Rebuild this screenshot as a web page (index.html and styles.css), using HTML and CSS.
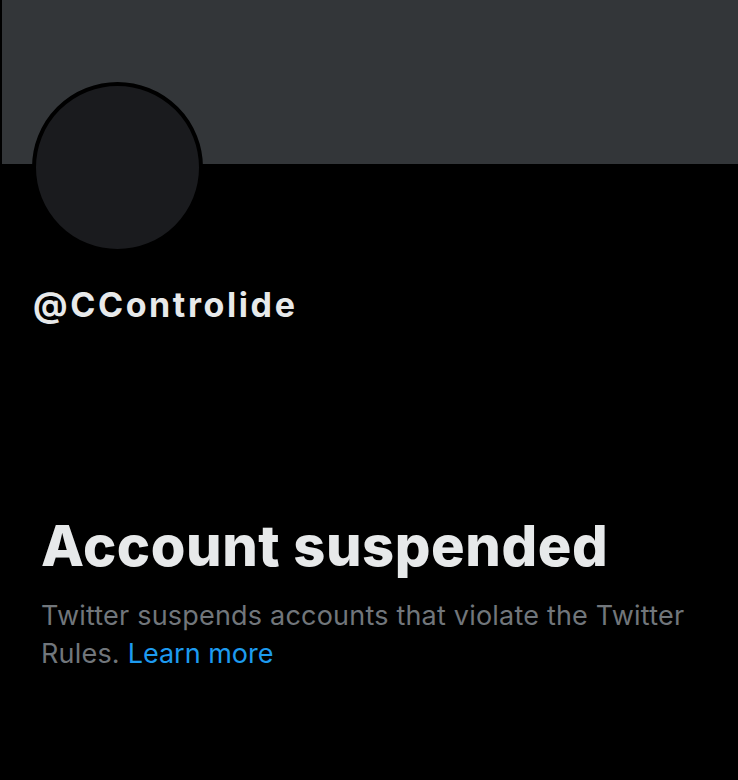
FILE: index.html
```html
<!DOCTYPE html>
<html lang="en">
<head>
<meta charset="utf-8">
<title>@CControlide</title>
<link rel="stylesheet" href="styles.css">
</head>
<body>
<div class="page">
  <div class="banner"></div>
  <div class="avatar"></div>
  <div class="handle">@CControlide</div>
  <div class="suspended">
    <h1 class="title">Account suspended</h1>
    <p class="desc">Twitter suspends accounts that violate the Twitter Rules. <a class="link" href="#">Learn more</a></p>
  </div>
</div>
</body>
</html>
```
FILE: styles.css
```css
html, body {
  margin: 0;
  padding: 0;
  background: #000;
}
.page {
  width: 738px;
  height: 780px;
  overflow: hidden;
  font-family: Inter, "Noto Sans", "Liberation Sans", sans-serif;
}
.banner {
  margin-left: 2px;
  height: 164px;
  background: #333639;
}
.avatar {
  margin-top: -82px;
  margin-left: 32px;
  width: 163px;
  height: 163px;
  border: 4px solid #000;
  border-radius: 50%;
  background: #1a1b1e;
}
.handle {
  margin-top: 32px;
  margin-left: 33px;
  font-size: 34px;
  font-weight: 700;
  letter-spacing: 2.6px;
  line-height: 40px;
  color: #e7e9ea;
}
.suspended {
  margin: 188px 0 0 41px;
  width: 680px;
}
.title {
  margin: 0;
  font-size: 56px;
  font-weight: 800;
  letter-spacing: 0.6px;
  line-height: 66px;
  color: #e7e9ea;
}
.desc {
  margin: 18px 0 0;
  font-size: 27px;
  letter-spacing: 0.2px;
  line-height: 38px;
  color: #71767b;
}
.link {
  color: #1d9bf0;
  letter-spacing: 0;
  text-decoration: none;
}
```
